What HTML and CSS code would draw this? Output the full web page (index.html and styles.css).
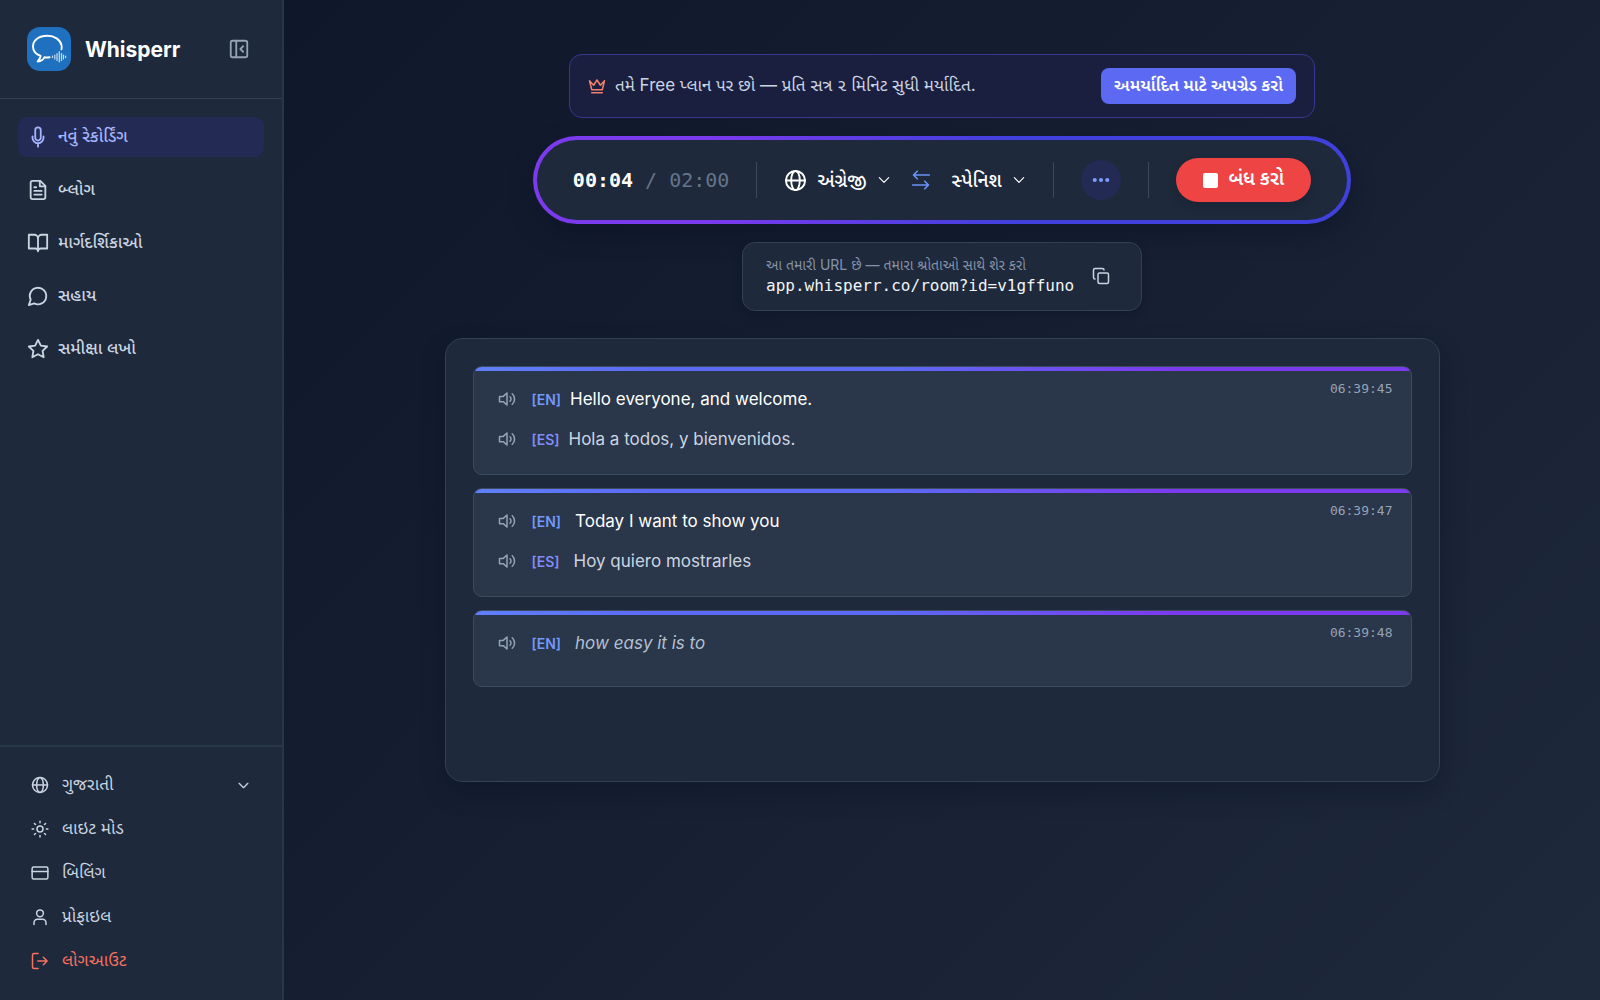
FILE: index.html
```html
<!DOCTYPE html>
<html lang="gu">
<head>
    <meta charset="UTF-8">
    <meta name="viewport" content="width=device-width, initial-scale=1">
    <title>Whisperr</title>
    <link rel="stylesheet" href="styles.css">
</head>
<body>
    <aside class="sidebar">
        <div class="sidebar-header">
            <svg class="logo" viewBox="0 0 44 44" aria-hidden="true">
                <rect width="44" height="44" rx="13" fill="#2070c0"/>
                <path d="M34.500 22.300c.4-1.300.4-2.500 0-4C33.200 12.500 27.500 8.800 20.300 8.800 12 8.800 6 13.200 6 19.500c0 4.300 2.600 7.600 7.600 9.500-.4 2.200-1.400 4-3 5.500 3.400-.4 5.600-1.800 6.800-4.200 1.800.4 3.400.3 5.200 0" fill="none" stroke="#fff" stroke-width="1.900" stroke-linecap="round" stroke-linejoin="round"/>
                <path d="M25.500 29v1.500M27.800 28v4M30 26.500v7M32.300 24.500v10.500M34.500 26.500v7M36.500 28v4M38.600 29v1.500" stroke="#c9def3" stroke-width="1.200" stroke-linecap="round"/>
            </svg>
            <span class="brand">Whisperr</span>
            <button class="icon-btn collapse-btn" aria-label="Collapse sidebar">
                <svg class="icon" viewBox="0 0 24 24"><rect x="3" y="3" width="18" height="18" rx="2"/><path d="M9 3v18M16.500 9l-3 3 3 3"/></svg>
            </button>
        </div>

        <nav class="nav">
            <a href="#" class="nav-item active">
                <svg class="icon" viewBox="0 0 24 24"><path d="M12 18.800a6 6 0 0 0 6-6v-1.500M12 18.800a6 6 0 0 1-6-6v-1.500M12 18.800v3.700M12 15.800a3 3 0 0 1-3-3V4.500a3 3 0 1 1 6 0v8.300a3 3 0 0 1-3 3Z"/></svg>
                નવું રેકોર્ડિંગ
            </a>
            <a href="#" class="nav-item">
                <svg class="icon" viewBox="0 0 24 24"><path d="M14.500 2H6a2 2 0 0 0-2 2v16a2 2 0 0 0 2 2h12a2 2 0 0 0 2-2V7.500L14.500 2Z"/><path d="M14 2v6h6M8 9h2M8 13h8M8 17h8"/></svg>
                બ્લોગ
            </a>
            <a href="#" class="nav-item">
                <svg class="icon" viewBox="0 0 24 24"><path d="M2 3h6a4 4 0 0 1 4 4v14a3 3 0 0 0-3-3H2zM22 3h-6a4 4 0 0 0-4 4v14a3 3 0 0 1 3-3h7z"/></svg>
                માર્ગદર્શિકાઓ
            </a>
            <a href="#" class="nav-item">
                <svg class="icon" viewBox="0 0 24 24"><path d="M7.900 20A9 9 0 1 0 4 16.100L2 22Z"/></svg>
                સહાય
            </a>
            <a href="#" class="nav-item">
                <svg class="icon" viewBox="0 0 24 24"><path d="m12 2 3.090 6.260L22 9.270l-5 4.870 1.180 6.880L12 17.770l-6.180 3.250L7 14.140 2 9.270l6.910-1.010z"/></svg>
                સમીક્ષા લખો
            </a>
        </nav>

        <div class="sidebar-footer">
            <button class="footer-item">
                <svg class="icon" viewBox="0 0 24 24"><circle cx="12" cy="12" r="10"/><ellipse cx="12" cy="12" rx="4.500" ry="10"/><path d="M2 12h20"/></svg>
                <span class="footer-label">ગુજરાતી</span>
                <svg class="icon chevron" viewBox="0 0 24 24"><path d="m5 8.500 7 7 7-7"/></svg>
            </button>
            <button class="footer-item">
                <svg class="icon" viewBox="0 0 24 24"><circle cx="12" cy="12" r="4"/><path d="M12 1.500v2M12 20.500v2M4.600 4.600 6 6M18 18l1.400 1.400M1.500 12h2M20.500 12h2M4.600 19.400 6 18M18 6l1.400-1.400"/></svg>
                લાઇટ મોડ
            </button>
            <a href="#" class="footer-item">
                <svg class="icon" viewBox="0 0 24 24"><rect x="1.500" y="4" width="21" height="16" rx="2"/><path d="M1.500 10h21"/></svg>
                બિલિંગ
            </a>
            <a href="#" class="footer-item">
                <svg class="icon" viewBox="0 0 24 24"><circle cx="12" cy="7" r="4.500"/><path d="M4 22v-2.500A4.500 4.500 0 0 1 8.500 15h7a4.500 4.500 0 0 1 4.500 4.500V22"/></svg>
                પ્રોફાઇલ
            </a>
            <button class="footer-item logout">
                <svg class="icon" viewBox="0 0 24 24"><path d="M9.500 22H4a2 2 0 0 1-2-2V4a2 2 0 0 1 2-2h5.500M16.500 17l5-5-5-5M21 12H9"/></svg>
                લોગઆઉટ
            </button>
        </div>
    </aside>

    <main class="main">
        <div class="banner">
            <svg class="icon crown" viewBox="0 0 24 24"><path d="m2 5 3 12h14l3-12-5.500 6L12 4l-4.500 7zM5 21h14"/></svg>
            <p class="banner-text">તમે Free પ્લાન પર છો — પ્રતિ સત્ર ૨ મિનિટ સુધી મર્યાદિત.</p>
            <button class="upgrade-btn">અમર્યાદિત માટે અપગ્રેડ કરો</button>
        </div>

        <div class="controls-ring">
            <div class="controls">
                <div class="timer">00:04 <span class="timer-max">/ 02:00</span></div>
                <span class="divider"></span>
                <div class="languages">
                    <label class="language">
                        <svg class="icon globe" viewBox="0 0 24 24"><circle cx="12" cy="12" r="10"/><ellipse cx="12" cy="12" rx="4.500" ry="10"/><path d="M2 12h20"/></svg>
                        <select aria-label="Source language">
                            <option>અંગ્રેજી</option>
                        </select>
                        <svg class="icon chevron" viewBox="0 0 24 24"><path d="m4 8 8 8 8-8"/></svg>
                    </label>
                    <button class="icon-btn swap-btn" aria-label="Swap languages">
                        <svg class="icon" viewBox="0 0 24 24"><path d="M22 6H3M7.500 1.500 3 6l4.500 4.500M2 18h19M16.500 13.500 21 18l-4.500 4.500"/></svg>
                    </button>
                    <label class="language">
                        <select aria-label="Target language">
                            <option>સ્પેનિશ</option>
                        </select>
                        <svg class="icon chevron" viewBox="0 0 24 24"><path d="m4 8 8 8 8-8"/></svg>
                    </label>
                </div>
                <span class="divider"></span>
                <button class="more-btn" aria-label="More">
                    <svg viewBox="0 0 24 24"><circle cx="4.500" cy="12" r="2.500"/><circle cx="12" cy="12" r="2.500"/><circle cx="19.500" cy="12" r="2.500"/></svg>
                </button>
                <span class="divider"></span>
                <button class="stop-btn"><span class="stop-icon"></span>બંધ કરો</button>
            </div>
        </div>

        <div class="share">
            <div class="share-text">
                <div class="share-label">આ તમારી URL છે — તમારા શ્રોતાઓ સાથે શેર કરો</div>
                <div class="share-url">app.whisperr.co/room?id=v1gffuno</div>
            </div>
            <button class="icon-btn copy-btn" aria-label="Copy">
                <svg class="icon" viewBox="0 0 24 24"><rect x="8" y="8" width="14" height="14" rx="2"/><path d="M4 16a2 2 0 0 1-2-2V4a2 2 0 0 1 2-2h10a2 2 0 0 1 2 2"/></svg>
            </button>
        </div>

        <section class="transcript">
            <article class="card">
                <div class="lines">
                    <div class="line">
                        <button class="icon-btn speak-btn" aria-label="Play"><svg class="icon" viewBox="0 0 24 24"><path d="M12 4 7 8.500H2v7h5l5 4.500zM16 9a4 4 0 0 1 0 6M19 5a9.500 9.500 0 0 1 0 14"/></svg></button>
                        <span class="tag">[EN]</span>
                        <p class="text">Hello everyone, and welcome.</p>
                    </div>
                    <div class="line translated">
                        <button class="icon-btn speak-btn" aria-label="Play"><svg class="icon" viewBox="0 0 24 24"><path d="M12 4 7 8.500H2v7h5l5 4.500zM16 9a4 4 0 0 1 0 6M19 5a9.500 9.500 0 0 1 0 14"/></svg></button>
                        <span class="tag">[ES]</span>
                        <p class="text">Hola a todos, y bienvenidos.</p>
                    </div>
                </div>
                <time class="time">06:39:45</time>
            </article>

            <article class="card continued">
                <div class="lines">
                    <div class="line">
                        <button class="icon-btn speak-btn" aria-label="Play"><svg class="icon" viewBox="0 0 24 24"><path d="M12 4 7 8.500H2v7h5l5 4.500zM16 9a4 4 0 0 1 0 6M19 5a9.500 9.500 0 0 1 0 14"/></svg></button>
                        <span class="tag">[EN]</span>
                        <p class="text">Today I want to show you</p>
                    </div>
                    <div class="line translated">
                        <button class="icon-btn speak-btn" aria-label="Play"><svg class="icon" viewBox="0 0 24 24"><path d="M12 4 7 8.500H2v7h5l5 4.500zM16 9a4 4 0 0 1 0 6M19 5a9.500 9.500 0 0 1 0 14"/></svg></button>
                        <span class="tag">[ES]</span>
                        <p class="text">Hoy quiero mostrarles</p>
                    </div>
                </div>
                <time class="time">06:39:47</time>
            </article>

            <article class="card continued">
                <div class="lines">
                    <div class="line interim">
                        <button class="icon-btn speak-btn" aria-label="Play"><svg class="icon" viewBox="0 0 24 24"><path d="M12 4 7 8.500H2v7h5l5 4.500zM16 9a4 4 0 0 1 0 6M19 5a9.500 9.500 0 0 1 0 14"/></svg></button>
                        <span class="tag">[EN]</span>
                        <p class="text">how easy it is to</p>
                    </div>
                </div>
                <time class="time">06:39:48</time>
            </article>
        </section>
    </main>
</body>
</html>
```
FILE: styles.css
```css
* {
    box-sizing: border-box;
}

body {
    margin: 0;
    min-height: 100vh;
    display: flex;
    font-family: Inter, "Noto Sans Gujarati", "Noto Sans", sans-serif;
    font-size: 17px;
    color: #cbd5e1;
    background-color: #0f172a;
}

p {
    margin: 0;
}

a {
    color: inherit;
    text-decoration: none;
}

button,
select {
    font: inherit;
    color: inherit;
    background: none;
    border: none;
    padding: 0;
    cursor: pointer;
}

.icon {
    display: block;
    width: 18px;
    height: 18px;
    flex-shrink: 0;
    fill: none;
    stroke: currentColor;
    stroke-width: 2;
    stroke-linecap: round;
    stroke-linejoin: round;
}

.icon-btn {
    display: flex;
    align-items: center;
    justify-content: center;
}

/* Sidebar */
.sidebar {
    width: 284px;
    flex-shrink: 0;
    display: flex;
    flex-direction: column;
    background-color: #1e293b;
    border-right: 2px solid #28364a;
}

.sidebar-header {
    height: 99px;
    display: flex;
    align-items: center;
    padding: 0 32px 0 27px;
    border-bottom: 1px solid #334155;
}

.logo {
    width: 44px;
    height: 44px;
}

.brand {
    margin-left: 14px;
    font-size: 21px;
    font-weight: 700;
    color: #fff;
}

.collapse-btn {
    margin-left: auto;
    color: #94a3b8;
}

.collapse-btn .icon {
    width: 22px;
    height: 22px;
}

.nav {
    flex: 1;
    display: flex;
    flex-direction: column;
    gap: 13px;
    padding: 18px;
}

.nav-item {
    height: 40px;
    display: flex;
    align-items: center;
    gap: 9px;
    padding: 0 9px;
    border-radius: 9px;
    font-weight: 500;
}

.nav-item .icon {
    width: 22px;
    height: 22px;
}

.nav-item.active {
    background-color: #232a54;
    color: #a5b4fc;
}

.sidebar-footer {
    display: flex;
    flex-direction: column;
    padding: 16px 18px 17px;
    border-top: 2px solid #28364a;
}

.footer-item {
    height: 44px;
    display: flex;
    align-items: center;
    gap: 13px;
    padding: 0 13px;
    text-align: left;
}

.footer-label {
    flex: 1;
}

.footer-item .chevron {
    width: 15px;
    height: 15px;
}

.footer-item.logout {
    color: #f87161;
}

/* Main column */
.main {
    flex: 1;
    min-width: 0;
    display: flex;
    flex-direction: column;
    align-items: center;
    padding: 54px 27px;
    background: linear-gradient(135deg, #0f172a, #1e293b);
}

.banner {
    width: 100%;
    max-width: 746px;
    display: flex;
    align-items: center;
    gap: 9px;
    padding: 13px 18px;
    border: 1px solid #3a3690;
    border-radius: 13px;
    background-color: #1a1f40;
}

.crown {
    color: #f0806a;
}

.banner-text {
    flex: 1;
}

.upgrade-btn {
    height: 36px;
    padding: 0 13px;
    border-radius: 8px;
    background-color: #5c69f3;
    color: #fff;
    font-weight: 600;
}

.controls-ring {
    margin-top: 18px;
    padding: 4px;
    border-radius: 44px;
    background: linear-gradient(90deg, #7c3aed 20%, #4040dc 60%);
    box-shadow: 0 10px 24px rgba(8, 14, 32, 0.4);
}

.controls {
    height: 80px;
    display: flex;
    align-items: center;
    gap: 27px;
    padding: 0 36px;
    border-radius: 40px;
    background-color: #1e293b;
}

.timer {
    font-family: "DejaVu Sans Mono", monospace;
    font-size: 20px;
    font-weight: 700;
    color: #fff;
    white-space: nowrap;
}

.timer-max {
    font-weight: 400;
    color: #64748b;
}

.divider {
    width: 1px;
    height: 36px;
    background-color: #3b495f;
}

.languages {
    display: flex;
    align-items: center;
    gap: 20px;
}

.language {
    display: flex;
    align-items: center;
    gap: 10px;
    color: #fff;
    font-size: 19px;
    font-weight: 500;
}

.language select {
    appearance: none;
}

.language .globe {
    width: 23px;
    height: 23px;
}

.language .chevron {
    width: 14px;
    height: 14px;
}

.swap-btn {
    color: #6b93f8;
}

.swap-btn .icon {
    width: 20px;
    height: 20px;
}

.more-btn {
    width: 40px;
    height: 40px;
    display: flex;
    align-items: center;
    justify-content: center;
    border-radius: 50%;
    background-color: #232a54;
}

.more-btn svg {
    width: 20px;
    height: 20px;
    fill: #7c9cfa;
}

.stop-btn {
    height: 44px;
    display: flex;
    align-items: center;
    gap: 10px;
    padding: 0 27px;
    border-radius: 22px;
    background-color: #ef4444;
    color: #fff;
    font-size: 19px;
    font-weight: 600;
    box-shadow: 0 4px 8px rgba(15, 23, 42, 0.3);
}

.stop-icon {
    width: 15px;
    height: 15px;
    border-radius: 2px;
    background-color: #fff;
}

.share {
    width: 100%;
    max-width: 400px;
    display: flex;
    align-items: center;
    justify-content: space-between;
    margin-top: 18px;
    padding: 12px 31px 13px 23px;
    border: 1px solid #334155;
    border-radius: 13px;
    background-color: #1e293b;
    box-shadow: 0 4px 8px rgba(8, 14, 32, 0.3);
}

.share-label {
    font-size: 14px;
    line-height: 20px;
    color: #8593aa;
}

.share-url {
    font-family: "DejaVu Sans Mono", monospace;
    font-size: 16px;
    line-height: 22px;
    color: #f1f5f9;
}

/* Transcript */
.transcript {
    width: 100%;
    max-width: 995px;
    min-height: 444px;
    display: flex;
    flex-direction: column;
    gap: 13px;
    margin-top: 27px;
    padding: 27px;
    border: 1px solid #334155;
    border-radius: 18px;
    background-color: #1e293b;
    box-shadow: 0 10px 24px rgba(8, 14, 32, 0.3);
}

.card {
    min-height: 77px;
    display: flex;
    align-items: flex-start;
    justify-content: space-between;
    padding: 12px 18px 15px 24px;
    border: 1px solid #3d4b60;
    border-radius: 9px;
    background: linear-gradient(90deg, #6080fa, #5c69f3 20%, #5c69f3 45%, #7c3aed 75%) top / 100% 4px no-repeat #2a3649;
}

.line {
    height: 40px;
    display: flex;
    align-items: center;
}

.line .tag {
    margin: 0 9px 0 16px;
    font-size: 14px;
    font-weight: 600;
    color: #7299fb;
}

.line .text {
    color: #fff;
}

.translated .tag {
    color: #818cf8;
}

.line.translated .text {
    color: #cbd5e1;
}

.line.interim .text {
    color: #b4bfd0;
    font-style: italic;
}

.continued .line .tag {
    margin-right: 14px;
}

.speak-btn {
    color: #94a3b8;
}

.time {
    font-family: "DejaVu Sans Mono", monospace;
    font-size: 13px;
    line-height: 20px;
    color: #94a3b8;
}
```
